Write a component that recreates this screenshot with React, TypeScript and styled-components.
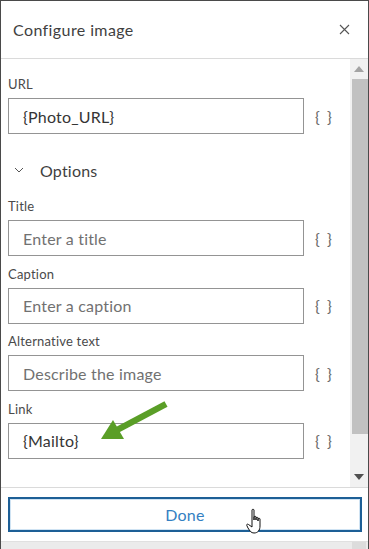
import React from "react";
import styled, { createGlobalStyle } from "styled-components";

const Global = createGlobalStyle`
  html, body { margin: 0; padding: 0; background: #fff; }
  body { font-family: "Lato", "Open Sans", sans-serif; }
  * { box-sizing: border-box; }
`;

const Frame = styled.div`
  position: relative;
  width: 369px;
  height: 549px;
  border: 1px solid #4a4a4a;
  border-bottom: none;
  display: flex;
  flex-direction: column;
  background: #fff;
  overflow: hidden;
`;

const Header = styled.div`
  height: 58px;
  flex: none;
  border-bottom: 1px solid #dadada;
  display: flex;
  align-items: center;
  justify-content: space-between;
  padding: 0 16px 0 12px;
`;

const Title = styled.h1`
  margin: 0;
  font-size: 16px;
  font-weight: 400;
  letter-spacing: 0.4px;
  color: #3f3f3f;
`;

const CloseBtn = styled.button`
  border: none;
  background: none;
  padding: 0;
  width: 16px;
  height: 16px;
  display: flex;
  align-items: center;
  justify-content: center;
`;

const Body = styled.div`
  height: 429px;
  flex: none;
  display: flex;
  border-bottom: 1px solid #dadada;
`;

const Content = styled.div`
  flex: 1;
  padding: 17px 0 0 7px;
  overflow: hidden;
`;

const Field = styled.div`
  margin-bottom: 9.5px;
`;

const Label = styled.div`
  font-size: 13px;
  line-height: 16px;
  letter-spacing: 0.2px;
  color: #4a4a4a;
  margin-bottom: 6px;
`;

const Row = styled.div`
  display: flex;
  align-items: center;
`;

const Input = styled.div<{ $placeholder?: boolean }>`
  width: 296px;
  height: 36px;
  border: 1px solid #949494;
  display: flex;
  align-items: center;
  padding-left: 14px;
  font-size: 16px;
  letter-spacing: 0.2px;
  color: ${(p) => (p.$placeholder ? "#717171" : "#353535")};
`;

const Braces = styled.span`
  margin-left: 11px;
  font-size: 16px;
  color: #6a6a6a;
  letter-spacing: 1.5px;
`;

const OptionsRow = styled.div`
  display: flex;
  align-items: center;
  height: 32px;
  margin: 20px 0 12px;
  padding-left: 6px;
`;

const OptionsText = styled.span`
  margin-left: 16px;
  font-size: 16px;
  letter-spacing: 0.2px;
  color: #3f3f3f;
`;

const Scrollbar = styled.div`
  width: 18px;
  flex: none;
  background: #f1f1f1;
  display: flex;
  flex-direction: column;
  align-items: stretch;
`;

const ArrowBox = styled.div`
  height: 20px;
  flex: none;
  display: flex;
  align-items: center;
  justify-content: center;
`;

const Thumb = styled.div`
  height: 355px;
  margin-left: 2px;
  background: #c1c1c1;
`;

const Spacer = styled.div`
  flex: 1;
`;

const Footer = styled.div`
  height: 53px;
  flex: none;
  padding: 9px 6px 9px 7px;
`;

const DoneButton = styled.button`
  width: 100%;
  height: 35px;
  border: 2px solid #1d5f96;
  box-shadow: inset 0 0 0 1px #cfe3f3;
  background: #fff;
  font-family: inherit;
  font-size: 16px;
  letter-spacing: 0.3px;
  color: #3480c2;
`;

const BottomStrip = styled.div`
  height: 8px;
  flex: none;
  background: #ebebeb;
  border-top: 1px solid #e0e0e0;
  display: flex;
  justify-content: flex-end;
`;

const StripThumb = styled.div`
  width: 14px;
  margin-right: 2px;
  background: #dcdcdc;
`;

const Overlay = styled.svg`
  position: absolute;
  pointer-events: none;
`;

const fields = [
  { label: "Title", value: "Enter a title", ph: true },
  { label: "Caption", value: "Enter a caption", ph: true },
  { label: "Alternative text", value: "Describe the image", ph: true },
  { label: "Link", value: "{Mailto}", ph: false },
];

export default function App() {
  return (
    <>
      <Global />
      <Frame>
        <Header>
          <Title>Configure image</Title>
          <CloseBtn aria-label="close">
            <svg width="11" height="11" viewBox="0 0 11 11">
              <path d="M1 1 L10 10 M10 1 L1 10" stroke="#555" strokeWidth="1.1" />
            </svg>
          </CloseBtn>
        </Header>
        <Body>
          <Content>
            <Field>
              <Label>URL</Label>
              <Row>
                <Input>{"{Photo_URL}"}</Input>
                <Braces>{"{ }"}</Braces>
              </Row>
            </Field>
            <OptionsRow>
              <svg width="10" height="6" viewBox="0 0 10 6">
                <path d="M1 1 L5 5 L9 1" fill="none" stroke="#555" strokeWidth="1" />
              </svg>
              <OptionsText>Options</OptionsText>
            </OptionsRow>
            {fields.map((f) => (
              <Field key={f.label}>
                <Label>{f.label}</Label>
                <Row>
                  <Input $placeholder={f.ph}>{f.value}</Input>
                  <Braces>{"{ }"}</Braces>
                </Row>
              </Field>
            ))}
          </Content>
          <Scrollbar>
            <ArrowBox>
              <svg width="10" height="6" viewBox="0 0 10 6">
                <path d="M0 6 L5 0 L10 6 Z" fill="#a3a3a3" />
              </svg>
            </ArrowBox>
            <Thumb />
            <Spacer />
            <ArrowBox>
              <svg width="10" height="6" viewBox="0 0 10 6">
                <path d="M0 0 L5 6 L10 0 Z" fill="#505050" />
              </svg>
            </ArrowBox>
          </Scrollbar>
        </Body>
        <Footer>
          <DoneButton>Done</DoneButton>
        </Footer>
        <BottomStrip>
          <StripThumb />
        </BottomStrip>
        <Overlay style={{ left: 95, top: 398 }} width="80" height="45" viewBox="0 0 80 45">
          <path d="M70 5 L21 31" stroke="#5a9e27" strokeWidth="6.5" strokeLinecap="butt" />
          <path d="M5 40 L17 21 L28 40 Z" fill="#5a9e27" />
        </Overlay>
        <Overlay style={{ left: 245, top: 507 }} width="22" height="28" viewBox="0 0 22 28">
          <path
            d="M6 2 C6 1 8 1 8 2 L8 12 L8 9 C8 8 10 8 10 9 L10 12 L10 10 C10 9 12 9 12 10 L12 13 L12 11 C12 10 14 10 14 11 L14 18 C14 22 12 25 8 25 C5 25 4 23 2 20 L0.8 17.5 C0.3 16.5 1.5 15.5 2.5 16.5 L6 19 Z"
            fill="#fff"
            stroke="#111"
            strokeWidth="1"
            strokeLinejoin="round"
          />
        </Overlay>
      </Frame>
    </>
  );
}
